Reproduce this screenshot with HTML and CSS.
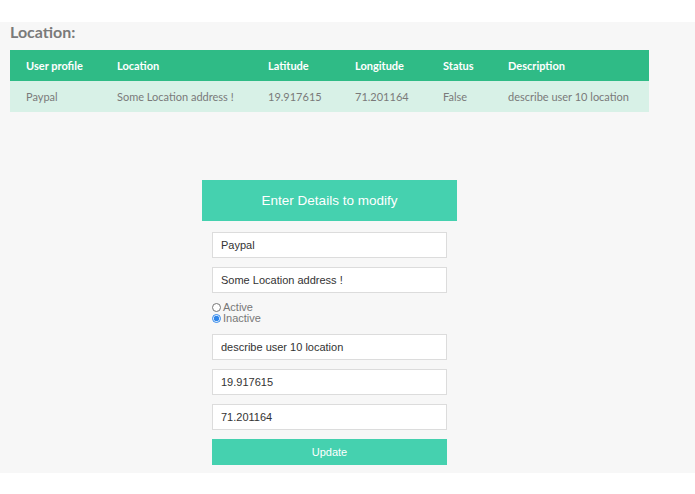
FILE: index.html
```html
<!DOCTYPE html>
<html lang="en">

<head>
    <meta charset="UTF-8">
    <meta name="viewport" content="width=device-width, initial-scale=1.0">
    <title>Location</title>
    <link rel="stylesheet" href="styles.css">
</head>

<body>
    <div class="page">
        <h2 class="title">Location:</h2>

        <!-- location table -->
        <table class="loc">
            <thead>
                <tr>
                    <th class="c1">User profile</th>
                    <th class="c2">Location</th>
                    <th class="c3">Latitude</th>
                    <th class="c4">Longitude</th>
                    <th class="c5">Status</th>
                    <th class="c6">Description</th>
                </tr>
            </thead>
            <tbody>
                <tr>
                    <td>Paypal</td>
                    <td>Some Location address !</td>
                    <td>19.917615</td>
                    <td>71.201164</td>
                    <td>False</td>
                    <td>describe user 10 location</td>
                </tr>
            </tbody>
        </table>

        <!-- edit form -->
        <div class="form">
            <div class="head">Enter Details to modify</div>
            <div class="fields">
                <input type="text" class="inp" value="Paypal">
                <input type="text" class="inp" value="Some Location address !">
                <div class="radios">
                    <label><input type="radio" name="status" value="active">Active</label>
                    <label><input type="radio" name="status" value="inactive" checked>Inactive</label>
                </div>
                <input type="text" class="inp" value="describe user 10 location">
                <input type="text" class="inp" value="19.917615">
                <input type="text" class="inp" value="71.201164">
                <button class="btn">Update</button>
            </div>
        </div>
    </div>
</body>

</html>
```

FILE: styles.css
```css
* {
    padding: 0;
    margin: 0;
    box-sizing: border-box;
}

body {
    background-color: white;
}

.page {
    margin-top: 22px;
    height: 451px;
    background-color: #f7f7f7;
    padding: 0 10px;
}

.title {
    font-family: Lato, sans-serif;
    font-weight: bold;
    font-size: 16px;
    color: #7a7a7a;
    line-height: 18px;
    padding-top: 1px;
    height: 28px;
}

.loc {
    width: 639px;
    border-collapse: collapse;
    font-family: Lato, sans-serif;
    font-size: 11px;
    text-align: left;
}

.loc th {
    background-color: #2fbb86;
    color: white;
    font-weight: bold;
    height: 31px;
    padding-left: 16px;
}

.loc td {
    background-color: #d8f1e7;
    color: #7a7a7a;
    height: 31px;
    padding-left: 16px;
}

.c1 { width: 91px; }
.c2 { width: 151px; }
.c3 { width: 87px; }
.c4 { width: 88px; }
.c5 { width: 65px; }
.c6 { width: 157px; }

.form {
    width: 255px;
    margin-left: 192px;
    margin-top: 68px;
    font-family: "Liberation Sans", Arial, sans-serif;
}

.head {
    background-color: #45d1af;
    color: white;
    font-size: 13.5px;
    height: 41px;
    line-height: 41px;
    text-align: center;
}

.fields {
    padding: 11px 10px 0;
    display: flex;
    flex-direction: column;
    gap: 9px;
}

.inp {
    height: 26px;
    width: 235px;
    border: 1px solid #dcdcdc;
    background: white;
    padding-left: 8px;
    font-family: "Liberation Sans", Arial, sans-serif;
    font-size: 11px;
    color: #333;
    outline: none;
}

.radios {
    display: flex;
    flex-direction: column;
    margin: 0 0 1px 0;
    font-size: 11px;
    color: #777;
    line-height: 11px;
}

.radios label {
    display: flex;
    align-items: center;
}

.radios input {
    width: 9px;
    height: 9px;
    margin: 0 2px 0 0;
    accent-color: #2f86ea;
}

.btn {
    height: 26px;
    width: 235px;
    border: none;
    background-color: #45d1af;
    color: white;
    font-family: "Liberation Sans", Arial, sans-serif;
    font-size: 11px;
    cursor: pointer;
}
```
